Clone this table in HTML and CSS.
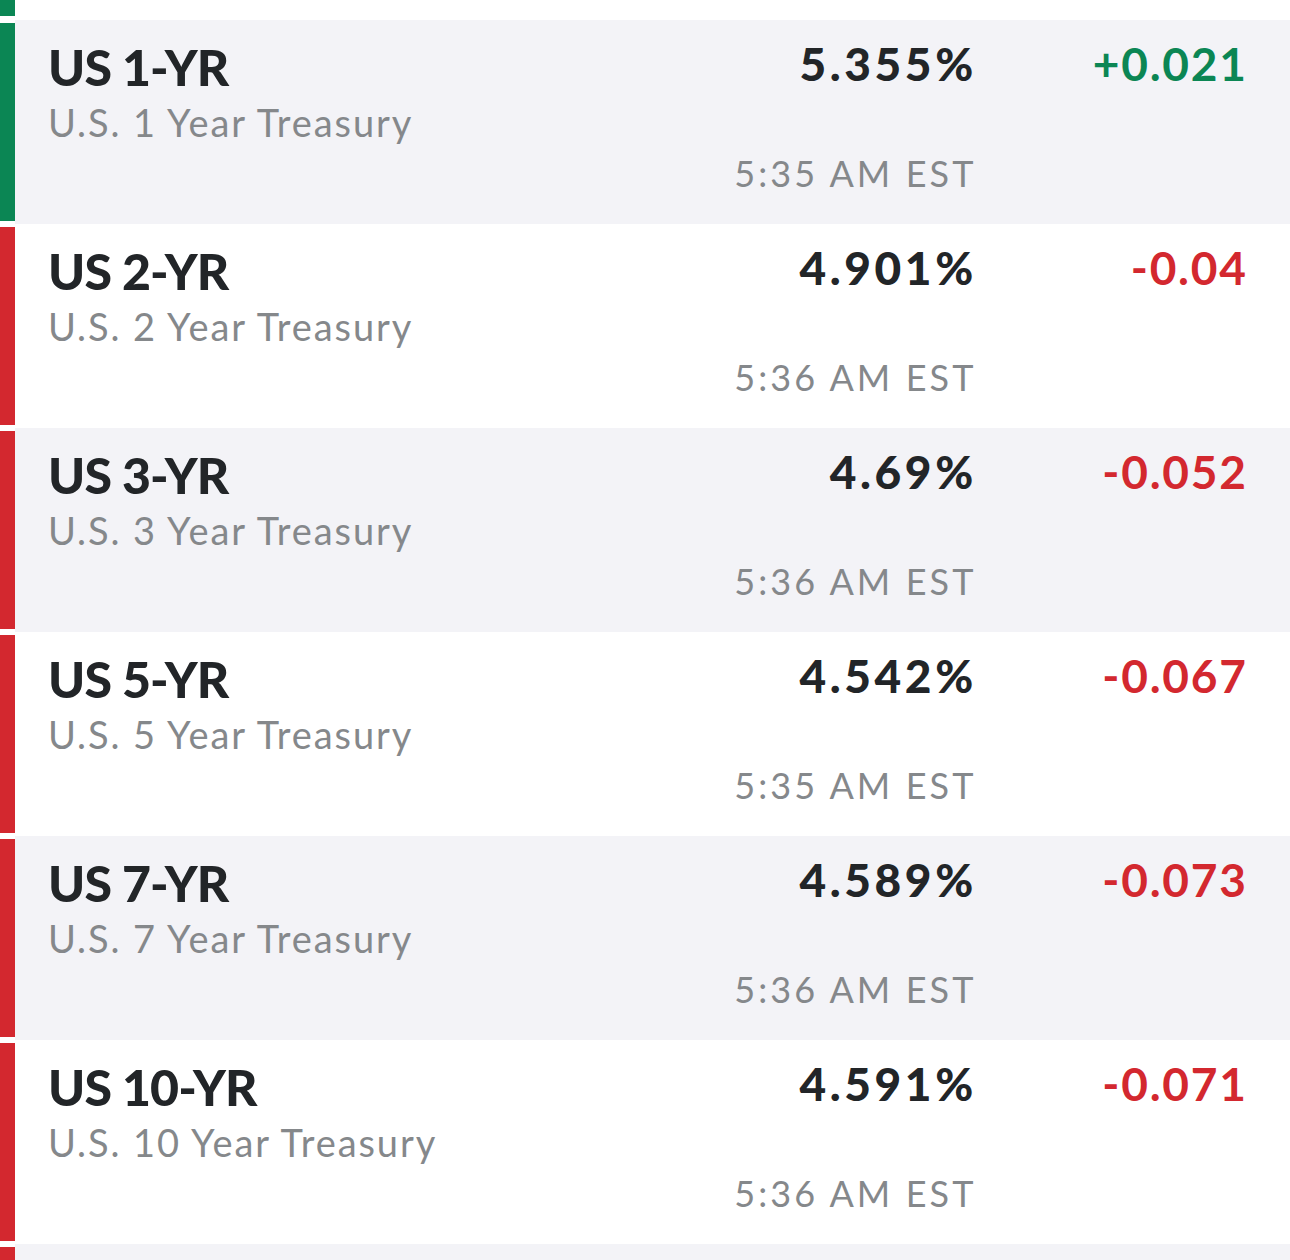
FILE: index.html
```html
<!DOCTYPE html>
<html>
<head>
<meta charset="utf-8">
<link rel="stylesheet" href="styles.css">
</head>
<body>
<div class="list">
  <div class="row row-top">
    <div class="bar up"></div>
    <div class="cell white"></div>
  </div>
  <div class="row">
    <div class="bar up"></div>
    <div class="cell gray">
      <div class="names"><div class="sym">US 1-YR</div><div class="desc">U.S. 1 Year Treasury</div></div>
      <div class="quote"><div class="price">5.355%</div><div class="time">5:35 AM EST</div></div>
      <div class="chg pos">+0.021</div>
    </div>
  </div>
  <div class="row">
    <div class="bar down"></div>
    <div class="cell white">
      <div class="names"><div class="sym">US 2-YR</div><div class="desc">U.S. 2 Year Treasury</div></div>
      <div class="quote"><div class="price">4.901%</div><div class="time">5:36 AM EST</div></div>
      <div class="chg neg">-0.04</div>
    </div>
  </div>
  <div class="row">
    <div class="bar down"></div>
    <div class="cell gray">
      <div class="names"><div class="sym">US 3-YR</div><div class="desc">U.S. 3 Year Treasury</div></div>
      <div class="quote"><div class="price">4.69%</div><div class="time">5:36 AM EST</div></div>
      <div class="chg neg">-0.052</div>
    </div>
  </div>
  <div class="row">
    <div class="bar down"></div>
    <div class="cell white">
      <div class="names"><div class="sym">US 5-YR</div><div class="desc">U.S. 5 Year Treasury</div></div>
      <div class="quote"><div class="price">4.542%</div><div class="time">5:35 AM EST</div></div>
      <div class="chg neg">-0.067</div>
    </div>
  </div>
  <div class="row">
    <div class="bar down"></div>
    <div class="cell gray">
      <div class="names"><div class="sym">US 7-YR</div><div class="desc">U.S. 7 Year Treasury</div></div>
      <div class="quote"><div class="price">4.589%</div><div class="time">5:36 AM EST</div></div>
      <div class="chg neg">-0.073</div>
    </div>
  </div>
  <div class="row">
    <div class="bar down"></div>
    <div class="cell white">
      <div class="names"><div class="sym">US 10-YR</div><div class="desc">U.S. 10 Year Treasury</div></div>
      <div class="quote"><div class="price">4.591%</div><div class="time">5:36 AM EST</div></div>
      <div class="chg neg">-0.071</div>
    </div>
  </div>
  <div class="row row-last">
    <div class="bar down"></div>
    <div class="cell gray"></div>
  </div>
</div>
</body>
</html>
```

FILE: styles.css
```css
html, body {
  margin: 0;
  padding: 0;
  background: #ffffff;
  overflow: hidden;
}
body {
  width: 1290px;
  height: 1260px;
  font-family: "Lato", "Liberation Sans", sans-serif;
}
.list {
  display: flex;
  flex-direction: column;
  height: 1260px;
  overflow: hidden;
}
.row {
  display: flex;
  height: 204px;
  flex-shrink: 0;
  background: #ffffff;
}
.row-top {
  height: 20px;
}
.row-top .bar {
  margin-top: 0;
  margin-bottom: 4px;
}
.bar {
  width: 15px;
  flex-shrink: 0;
  margin: 3px 0;
}
.bar.up { background: #0b8654; }
.bar.down { background: #d3282f; }
.cell {
  flex: 1;
  display: flex;
  align-items: flex-start;
  padding: 0 46px 0 33px;
}
.cell.gray { background: #f3f3f7; }
.cell.white { background: #ffffff; }
.names {
  flex: 1;
  padding-top: 17px;
}
.sym {
  font-size: 50px;
  line-height: 60px;
  font-weight: 900;
  letter-spacing: -0.9px;
  color: #222528;
}
.desc {
  margin-top: 2px;
  font-size: 38px;
  line-height: 46px;
  letter-spacing: 1.9px;
  color: #85888b;
}
.quote {
  padding-top: 16px;
  display: flex;
  flex-direction: column;
  align-items: flex-end;
}
.price {
  font-size: 46px;
  line-height: 56px;
  font-weight: 900;
  letter-spacing: 3.6px;
  margin-right: -1px;
  color: #222528;
}
.time {
  margin-top: 60px;
  font-size: 36px;
  line-height: 42px;
  letter-spacing: 3.1px;
  margin-right: -0.8px;
  color: #85888b;
}
.chg {
  width: 272px;
  text-align: right;
  padding-top: 16px;
  font-size: 46px;
  line-height: 56px;
  font-weight: 700;
  letter-spacing: 1.8px;
  margin-right: -3.8px;
}
.chg.pos { color: #0b8654; }
.chg.neg { color: #d3282f; }
```
